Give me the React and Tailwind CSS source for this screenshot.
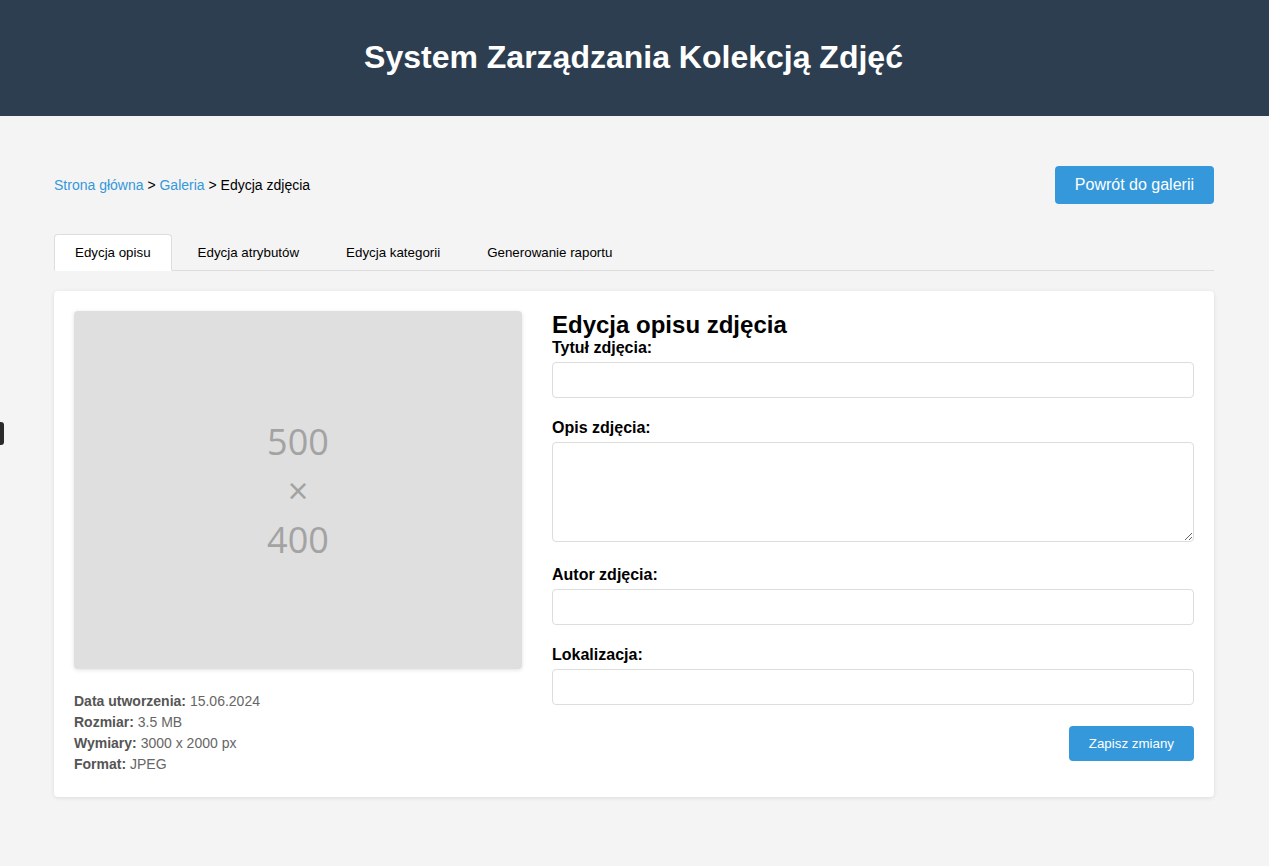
import React from 'react';

const tabs = ['Edycja opisu', 'Edycja atrybutów', 'Edycja kategorii', 'Generowanie raportu'];

const meta = [
    ['Data utworzenia:', '15.06.2024'],
    ['Rozmiar:', '3.5 MB'],
    ['Wymiary:', '3000 x 2000 px'],
    ['Format:', 'JPEG'],
];

const Field = ({ label, textarea }) => (
    <div className={textarea ? 'mb-[23px]' : 'mb-[20px]'}>
        <label className="block font-bold text-[16px] leading-[19px] mb-[5px] text-black">{label}</label>
        {textarea ? (
            <textarea className="block w-full h-[100px] border border-[#ddd] rounded-[4px] bg-white px-[10px] py-[8px] resize" />
        ) : (
            <input type="text" className="block w-full h-[36px] border border-[#ddd] rounded-[4px] bg-white px-[10px]" />
        )}
    </div>
);

const App = () => {
    return (
        <div className="min-h-screen bg-[#f4f4f4] font-['Liberation_Sans',Arial,sans-serif] text-[#333] relative">
            {/* header */}
            <header className="h-[116px] bg-[#2c3e50] flex items-center justify-center">
                <h1 className="text-white text-[32px] font-bold leading-[37px] -mt-[2px] -ml-[2px]">System Zarządzania Kolekcją Zdjęć</h1>
            </header>

            {/* little floating handle on the left edge */}
            <div className="absolute left-[-6px] top-[422px] w-[10px] h-[23px] rounded-[3px] bg-[#2a2a2a]" />

            <main className="w-[1160px] ml-[54px] pt-[50px]">
                <div className="flex items-center justify-between">
                    <nav className="text-[14px] text-black">
                        <a href="#" className="text-[#3498db]">Strona główna</a>
                        {' > '}
                        <a href="#" className="text-[#3498db]">Galeria</a>
                        {' > '}
                        <span>Edycja zdjęcia</span>
                    </nav>
                    <button className="h-[38px] px-[20px] rounded-[4px] bg-[#3498db] text-white text-[16px]">Powrót do galerii</button>
                </div>

                {/* tabs */}
                <div className="mt-[30px] flex border-b border-[#ddd]">
                    {tabs.map((t, i) => (
                        <div
                            key={t}
                            className={
                                i === 0
                                    ? 'mr-[5px] -mb-px px-[20px] h-[37px] flex items-center text-[13.333px] text-black bg-white border border-[#ddd] border-b-white rounded-t-[4px]'
                                    : 'mr-[5px] -mb-px px-[20px] h-[37px] flex items-center text-[13.333px] text-black border border-transparent'
                            }
                        >
                            {t}
                        </div>
                    ))}
                </div>

                {/* card */}
                <div className="mt-[20px] bg-white rounded-[4px] shadow-[0_1px_4px_rgba(0,0,0,0.1)] p-[20px] pb-[22px] flex gap-[30px]">
                    <div className="w-[448px] shrink-0">
                        <div className="w-[448px] h-[358px] bg-[#dfdfdf] rounded-[4px] shadow-[0_1px_4px_rgba(0,0,0,0.12)] flex flex-col items-center justify-center font-['Open_Sans',sans-serif] text-[36px] leading-[49px] text-[#a3a3a3]">
                            <span>500</span>
                            <span>×</span>
                            <span>400</span>
                        </div>
                        <div className="mt-[22px] text-[14px] leading-[21px] text-[#666]">
                            {meta.map(([k, v]) => (
                                <div key={k}>
                                    <strong className="font-bold text-[#555]">{k}</strong> {v}
                                </div>
                            ))}
                        </div>
                    </div>

                    <div className="flex-1">
                        <h2 className="text-[24px] font-bold leading-[27px] text-black">Edycja opisu zdjęcia</h2>
                        <Field label="Tytuł zdjęcia:" />
                        <Field label="Opis zdjęcia:" textarea />
                        <Field label="Autor zdjęcia:" />
                        <Field label="Lokalizacja:" />
                        <div className="flex justify-end -mt-px pt-[2px]">
                            <button className="h-[35px] px-[20px] rounded-[4px] bg-[#3498db] text-white text-[13.333px]">Zapisz zmiany</button>
                        </div>
                    </div>
                </div>
            </main>
        </div>
    );
};

export default App;
